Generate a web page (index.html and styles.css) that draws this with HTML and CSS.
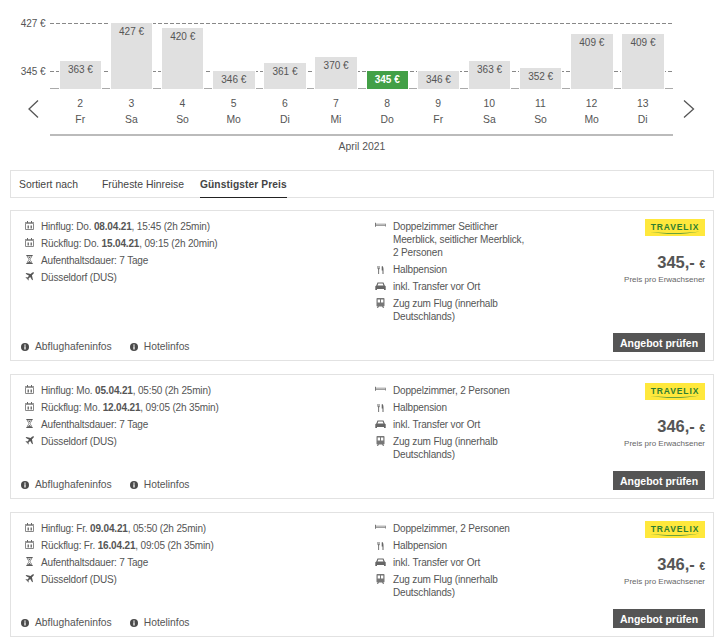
FILE: index.html
```html
<!DOCTYPE html>
<html lang="de">
<head>
<meta charset="utf-8">
<title>Angebote</title>
<link rel="stylesheet" href="styles.css">
</head>
<body>
<svg class="defs" width="0" height="0" aria-hidden="true">
  <symbol id="i-cal" viewBox="0 0 9 9"><path d="M.5 1.500h8v7h-8z" fill="none" stroke="#888"/><path d="M0 1h9v2H0z" fill="#999"/><path d="M2 0h1v2H2zM6 0h1v2H6z" fill="#666"/><path d="M2.500 4.500h1.500v3H2.500zM5.500 4.500H7v3H5.500z" fill="#777"/></symbol>
  <symbol id="i-glass" viewBox="0 0 9 10"><path d="M1 0h7v1H1zM1 9h7v1H1z" fill="#555"/><path d="M2 1c0 2 1.800 2.800 1.800 4S2 7 2 9h5c0-2-1.800-2.800-1.800-4S7 3 7 1z" fill="#fff" stroke="#666" stroke-width=".8"/><path d="M2.500 9l2-2.500 2 2.500zM3 2h3L4.500 4z" fill="#666"/></symbol>
  <symbol id="i-plane" viewBox="0 0 10 10"><path d="M9.700.300C9.100-.100 8.300.300 7.700.900L6.300 2.300 1.500 1.200.700 2l3.800 2.200-1.800 1.900-1.500-.2-.7.600 2 1 1 2 .6-.7-.2-1.500 1.900-1.800L8 9.300l.8-.8-1.100-4.800L9.100 2.300c.6-.6 1-1.400.6-2z" fill="#555"/></symbol>
  <symbol id="i-bed" viewBox="0 0 11 10"><path d="M0 1.800h1v.9h10V5.500h-.8V5H1v.7H0z" fill="#777"/><path d="M1 3h9.500v1.600H1z" fill="#bbb"/></symbol>
  <symbol id="i-food" viewBox="0 0 11 10"><path d="M2.500 2v2.500l.7 1V10h.9V5.500l.7-1V2h-.5v2.300h-.4V2H3.500v2.300h-.4V2zM7.300 2C8.500 2.500 8.500 4.500 8.500 6v4h-1V6.500h-.8V3.500c0-.8 0-1.500.6-1.500z" fill="#666"/></symbol>
  <symbol id="i-car" viewBox="0 0 11 10"><path d="M2.500 1.500h6l1.200 3 1 .7V9H9V8H2v1H.3V5.200l1-.7zM3.300 2.500l-.8 2h6l-.8-2z" fill="#666" fill-rule="evenodd"/></symbol>
  <symbol id="i-train" viewBox="0 0 11 10"><path d="M2.500 0h6c.6 0 1 .4 1 1v6.500c0 .6-.4 1-1 1H8.200l1 1.500H8L7 8.500H4L3 10H1.800l1-1.500h-.3c-.6 0-1-.4-1-1V1c0-.6.4-1 1-1zm.2 1.500v3h2.300v-3zm3.300 0v3h2.300v-3z" fill="#777" fill-rule="evenodd"/></symbol>
  <symbol id="i-info" viewBox="0 0 10 10"><circle cx="5" cy="5" r="5" fill="#4a4a4a"/><path d="M4.200 1.800h1.600v1.500H4.200zM4.200 4.200h1.600v4H4.200z" fill="#fff"/></symbol>
  <symbol id="logo" viewBox="0 0 60 17"><rect width="60" height="17" fill="#ffe83c"/><path d="M5 13c15 1.500 35 1.500 50-.5-15 3-35 3-50 .5z" fill="#3a8a3c"/></symbol>
</svg>

<section class="chart">
  <div class="axis-row">
    <button class="nav" aria-label="Zurück"><svg class="chev" viewBox="0 0 14 20"><path d="M11 1.500L2 10l9 8.500" fill="none" stroke="#555" stroke-width="1.300"/></svg></button>
    <div class="plot">
      <span class="tick tick-hi"><span class="tick-label">427 €</span></span>
      <span class="tick tick-lo"><span class="tick-label">345 €</span></span>
      <div class="bars">
        <div class="col"><div class="bar h27">363 €</div></div>
        <div class="col"><div class="bar h65">427 €</div></div>
        <div class="col"><div class="bar h61">420 €</div></div>
        <div class="col"><div class="bar h17">346 €</div></div>
        <div class="col"><div class="bar h26">361 €</div></div>
        <div class="col"><div class="bar h31">370 €</div></div>
        <div class="col"><div class="bar h17 best">345 €</div></div>
        <div class="col"><div class="bar h17">346 €</div></div>
        <div class="col"><div class="bar h27">363 €</div></div>
        <div class="col"><div class="bar h21">352 €</div></div>
        <div class="col"><div class="bar h55">409 €</div></div>
        <div class="col"><div class="bar h55">409 €</div></div>
      </div>
      <div class="days">
        <div class="day">2<br>Fr</div>
        <div class="day">3<br>Sa</div>
        <div class="day">4<br>So</div>
        <div class="day">5<br>Mo</div>
        <div class="day">6<br>Di</div>
        <div class="day">7<br>Mi</div>
        <div class="day">8<br>Do</div>
        <div class="day">9<br>Fr</div>
        <div class="day">10<br>Sa</div>
        <div class="day">11<br>So</div>
        <div class="day">12<br>Mo</div>
        <div class="day">13<br>Di</div>
      </div>
      <div class="month">April 2021</div>
    </div>
    <button class="nav nav-next" aria-label="Weiter"><svg class="chev" viewBox="0 0 14 20"><path d="M2 1.500l9.500 8.500L2 18.500" fill="none" stroke="#555" stroke-width="1.300"/></svg></button>
  </div>
</section>

<nav class="tabs">
  <span class="tab-label">Sortiert nach</span>
  <span class="tab">Früheste Hinreise</span>
  <span class="tab active">Günstigster Preis</span>
</nav>

<article class="card">
  <ul class="list facts">
    <li><svg class="ic"><use href="#i-cal"/></svg>Hinflug: Do. <b>08.04.21</b>, 15:45 (2h 25min)</li>
    <li><svg class="ic"><use href="#i-cal"/></svg>Rückflug: Do. <b>15.04.21</b>, 09:15 (2h 20min)</li>
    <li><svg class="ic"><use href="#i-glass"/></svg>Aufenthaltsdauer: 7 Tage</li>
    <li><svg class="ic"><use href="#i-plane"/></svg>Düsseldorf (DUS)</li>
  </ul>
  <ul class="list mid">
    <li><svg class="ic"><use href="#i-bed"/></svg><span>Doppelzimmer Seitlicher<br>Meerblick, seitlicher Meerblick,<br>2 Personen</span></li>
    <li><svg class="ic"><use href="#i-food"/></svg><span>Halbpension</span></li>
    <li><svg class="ic"><use href="#i-car"/></svg><span>inkl. Transfer vor Ort</span></li>
    <li><svg class="ic"><use href="#i-train"/></svg><span>Zug zum Flug (innerhalb<br>Deutschlands)</span></li>
  </ul>
  <div class="side">
    <div class="logo"><svg class="logo-bg"><use href="#logo"/></svg><span class="logo-text">TRAVELIX</span></div>
    <div class="price">345,- <small>€</small></div>
    <div class="per">Preis pro Erwachsener</div>
  </div>
  <div class="links">
    <span class="link"><svg class="info"><use href="#i-info"/></svg>Abflughafeninfos</span>
    <span class="link"><svg class="info"><use href="#i-info"/></svg>Hotelinfos</span>
  </div>
  <button class="cta">Angebot prüfen</button>
</article>

<article class="card">
  <ul class="list facts">
    <li><svg class="ic"><use href="#i-cal"/></svg>Hinflug: Mo. <b>05.04.21</b>, 05:50 (2h 25min)</li>
    <li><svg class="ic"><use href="#i-cal"/></svg>Rückflug: Mo. <b>12.04.21</b>, 09:05 (2h 35min)</li>
    <li><svg class="ic"><use href="#i-glass"/></svg>Aufenthaltsdauer: 7 Tage</li>
    <li><svg class="ic"><use href="#i-plane"/></svg>Düsseldorf (DUS)</li>
  </ul>
  <ul class="list mid">
    <li><svg class="ic"><use href="#i-bed"/></svg><span>Doppelzimmer, 2 Personen</span></li>
    <li><svg class="ic"><use href="#i-food"/></svg><span>Halbpension</span></li>
    <li><svg class="ic"><use href="#i-car"/></svg><span>inkl. Transfer vor Ort</span></li>
    <li><svg class="ic"><use href="#i-train"/></svg><span>Zug zum Flug (innerhalb<br>Deutschlands)</span></li>
  </ul>
  <div class="side">
    <div class="logo"><svg class="logo-bg"><use href="#logo"/></svg><span class="logo-text">TRAVELIX</span></div>
    <div class="price">346,- <small>€</small></div>
    <div class="per">Preis pro Erwachsener</div>
  </div>
  <div class="links">
    <span class="link"><svg class="info"><use href="#i-info"/></svg>Abflughafeninfos</span>
    <span class="link"><svg class="info"><use href="#i-info"/></svg>Hotelinfos</span>
  </div>
  <button class="cta">Angebot prüfen</button>
</article>

<article class="card">
  <ul class="list facts">
    <li><svg class="ic"><use href="#i-cal"/></svg>Hinflug: Fr. <b>09.04.21</b>, 05:50 (2h 25min)</li>
    <li><svg class="ic"><use href="#i-cal"/></svg>Rückflug: Fr. <b>16.04.21</b>, 09:05 (2h 35min)</li>
    <li><svg class="ic"><use href="#i-glass"/></svg>Aufenthaltsdauer: 7 Tage</li>
    <li><svg class="ic"><use href="#i-plane"/></svg>Düsseldorf (DUS)</li>
  </ul>
  <ul class="list mid">
    <li><svg class="ic"><use href="#i-bed"/></svg><span>Doppelzimmer, 2 Personen</span></li>
    <li><svg class="ic"><use href="#i-food"/></svg><span>Halbpension</span></li>
    <li><svg class="ic"><use href="#i-car"/></svg><span>inkl. Transfer vor Ort</span></li>
    <li><svg class="ic"><use href="#i-train"/></svg><span>Zug zum Flug (innerhalb<br>Deutschlands)</span></li>
  </ul>
  <div class="side">
    <div class="logo"><svg class="logo-bg"><use href="#logo"/></svg><span class="logo-text">TRAVELIX</span></div>
    <div class="price">346,- <small>€</small></div>
    <div class="per">Preis pro Erwachsener</div>
  </div>
  <div class="links">
    <span class="link"><svg class="info"><use href="#i-info"/></svg>Abflughafeninfos</span>
    <span class="link"><svg class="info"><use href="#i-info"/></svg>Hotelinfos</span>
  </div>
  <button class="cta">Angebot prüfen</button>
</article>
</body>
</html>
```
FILE: styles.css
```css
* { box-sizing: border-box; }
html, body { margin: 0; padding: 0; }
body {
  background: #fff;
  color: #555;
  font-family: "Liberation Sans", Arial, sans-serif;
  font-size: 10px;
  line-height: 13px;
  padding: 0 11px 0 10px;
  height: 644px;
  overflow: hidden;
}
.defs { position: absolute; }

.chart { padding-top: 23px; height: 170px; }
.axis-row { display: flex; margin: 0 -10px; }
.nav { border: 0; background: none; padding: 0 9px 0 0; width: 50px; height: 20px; margin-top: 76px; display: flex; justify-content: flex-end; }
.nav-next { width: 51px; padding: 0 0 0 9px; justify-content: flex-start; }
.chev { width: 14px; height: 20px; }
.plot { position: relative; width: 624px; }

.tick { position: absolute; left: 0; right: 0; height: 1px; background: repeating-linear-gradient(90deg, #888 0 4px, transparent 4px 6px); }
.tick-hi { top: 0; }
.tick-lo { top: 48px; }
.tick-label { position: absolute; left: -29px; top: -6px; line-height: 13px; white-space: nowrap; }

.bars { position: relative; display: flex; height: 66px; align-items: flex-end; border-bottom: 1px solid #aaa; padding-left: 10px; }
.col { flex: 0 0 51.15px; display: flex; }
.bar { width: 41.5px; background: #e0e0e0; text-align: center; padding-top: 2px; margin-bottom: -1px; box-shadow: 0 0 0 1px #fff; position: relative; }
.bar.best { background: #43a047; color: #fff; font-weight: 700; }
.h17 { height: 18px; }
.h21 { height: 21px; }
.h26 { height: 26px; }
.h27 { height: 28px; }
.h31 { height: 32px; }
.h55 { height: 55px; }
.h61 { height: 61px; }
.h65 { height: 66px; }

.days { display: flex; padding: 7px 0 0 5px; line-height: 16px; height: 47px; border-bottom: 2px solid #bbb; font-size: 10.4px; }
.day { flex: 0 0 51.15px; text-align: center; }
.month { text-align: center; padding-top: 4px; margin-left: 1px; font-size: 10.4px; }

.tabs { display: flex; height: 28px; border: 1px solid #e2e2e2; padding-left: 8px; align-items: stretch; margin-bottom: 12px; font-size: 10.4px; }
.tabs > span { display: flex; align-items: center; }
.tab-label { color: #444; width: 83px; }
.tab { margin-right: 16px; color: #444; }
.tab.active { font-weight: 700; color: #444; border-bottom: 1px solid #222; margin-bottom: -1px; font-size: 10.2px; letter-spacing: .01em; }

.card {
  display: grid;
  grid-template-columns: 354px 1fr 92px;
  grid-template-rows: auto auto;
  border: 1px solid #e2e2e2;
  padding: 9px 8px 8px 10px;
  margin-bottom: 13px;
}
.list { list-style: none; margin: 0; padding: 0; font-size: 10px; letter-spacing: -.16px; }
.list li { display: flex; margin-bottom: 4px; align-items: flex-start; }
.list li:last-child { margin-bottom: 0; }
.facts li { display: block; position: relative; padding-left: 20px; }
.ic { width: 11px; height: 10px; flex: none; margin: 1px 7px 0 0; }
.facts .ic { position: absolute; left: 4px; top: 1px; width: 9px; height: 9px; margin: 0; }

.side { text-align: right; margin-top: -1px; }
.logo { position: relative; width: 60px; height: 17px; margin-left: auto; text-align: center; }
.logo-bg { position: absolute; inset: 0; width: 60px; height: 17px; }
.logo-text { position: relative; color: #2e7d32; font-weight: 700; font-size: 8.5px; line-height: 16px; letter-spacing: .9px; }
.price { font-size: 16.5px; font-weight: 700; line-height: 20px; margin-top: 16px; color: #555; padding-right: 0; }
.price small { font-size: 10px; font-weight: 700; }
.per { font-size: 8px; line-height: 10px; margin-top: 0; color: #666; }

.links { grid-column: 1 / 3; display: flex; gap: 18px; align-self: end; margin-bottom: -1px; font-size: 10.3px; }
.link { display: flex; align-items: center; }
.info { width: 8px; height: 8px; margin-right: 6px; }
.cta { background: #555; color: #fff; border: 0; padding: 0; width: 92px; height: 19px; font: 700 10.5px "Liberation Sans", Arial, sans-serif; margin-top: 10px; }
```
